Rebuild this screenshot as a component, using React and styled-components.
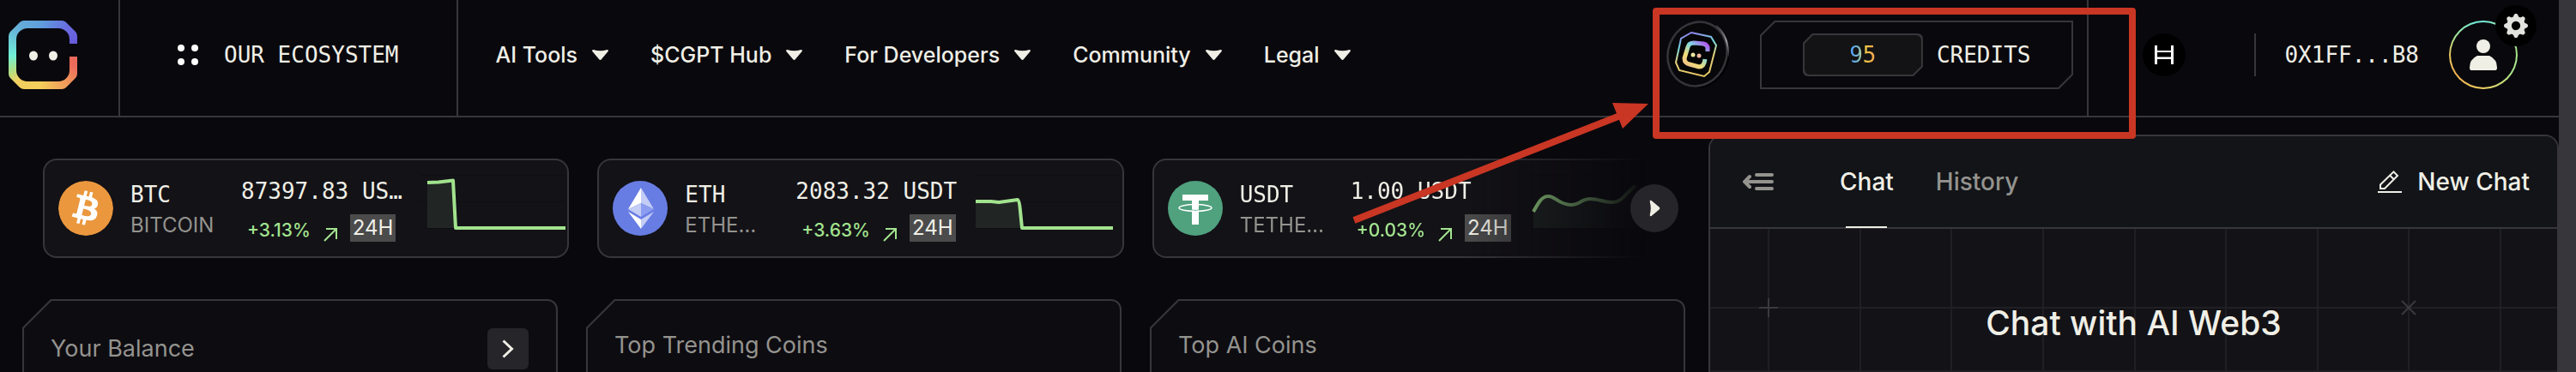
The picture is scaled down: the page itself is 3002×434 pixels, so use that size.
import React from "react";
import styled, { createGlobalStyle } from "styled-components";
import { BsGearFill } from "react-icons/bs";
import { SiBitcoin } from "react-icons/si";

const color = {
  page: "#09080d",
  panel: "#0d0c11",
  card: "#131217",
  line: "#37363a",
  text: "#f0efe6",
  muted: "#94938e",
  green: "#a2e38e",
  mark: "#c93623",
};
const sans = `Inter, "Liberation Sans", sans-serif`;
const mono = `"DejaVu Sans Mono", "Liberation Mono", monospace`;

const GlobalStyle = createGlobalStyle`
  *, *::before, *::after { box-sizing: border-box; }
  body { margin: 0; background: ${color.page}; color: ${color.text}; font-family: ${sans}; }
  button { margin: 0; padding: 0; border: 0; background: none; color: inherit; font: inherit; cursor: pointer; }
  svg { display: block; flex: none; }
  h1, h2, p { margin: 0; font-weight: 400; }
`;

const Page = styled.div`
  display: flex;
  min-height: 100vh;
`;
const Main = styled.div`
  flex: 1;
  min-width: 0;
  display: flex;
  flex-direction: column;
`;
const ScrollTrack = styled.div`
  flex: none;
  width: 20px;
  background: ${color.line};
`;

/* Header */
const Header = styled.header`
  position: relative;
  display: flex;
  border-bottom: 2px solid ${color.line};
`;
const HeaderCell = styled.div`
  display: flex;
  align-items: center;
  min-height: 135px;
  padding: 0 ${(p) => p.$right}px 7px ${(p) => p.$left}px;
  border-right: ${(p) => (p.$divided ? `2px solid ${color.line}` : "0")};
`;
const LogoLink = styled.a`
  position: relative;
  display: block;
  width: 80px;
  height: 80px;
`;
const LogoRing = styled.span`
  position: absolute;
  inset: 0;
  background: conic-gradient(#5e9bdc 0deg, #6a6be0 45deg, #6656da 75deg, #ec6a5a 95deg, #ec6a5a 110deg, #f09a5a 140deg, #f3cf5a 185deg, #f0d060 225deg, #a8e08a 245deg, #72f0d8 268deg, #66b0d8 315deg, #5e9bdc 360deg);
  clip-path: path("M18 0H62Q65 0 67 2L78 13Q80 15 80 18V27H71V22A13 13 0 0 0 58 9H22A13 13 0 0 0 9 22V58A13 13 0 0 0 22 71H58A13 13 0 0 0 71 58V42H80V62Q80 65 78 67L67 78Q65 80 62 80H18Q15 80 13 78L2 67Q0 65 0 62V18Q0 15 2 13L13 2Q15 0 18 0Z");
`;
const LogoEyes = styled.svg`
  position: absolute;
  inset: 0;
`;
const Mono = styled.span`
  font-family: ${mono};
  font-size: 26px;
  line-height: 36px;
  white-space: nowrap;
`;
const EcosystemButton = styled.button`
  display: flex;
  align-items: center;
  gap: 30px;
`;
const Nav = styled.nav`
  display: flex;
  gap: 49px;
`;
const NavButton = styled.button`
  display: flex;
  align-items: center;
  gap: 17px;
  font-size: 25px;
  font-weight: 500;
  line-height: 36px;
  white-space: nowrap;
`;
const Spacer = styled.div`
  flex: 1;
`;
const chamfer = (n) =>
  `polygon(${n}px 0, 100% 0, 100% calc(100% - ${n}px), calc(100% - ${n}px) 100%, 0 100%, 0 ${n}px)`;
const Chamfered = styled.div`
  position: relative;
  isolation: isolate;
  display: flex;
  align-items: center;
  background: ${color.line};
  border-radius: ${(p) => p.$radius}px;
  clip-path: ${(p) => chamfer(p.$cut)};
  &::before {
    content: "";
    position: absolute;
    z-index: -1;
    inset: 2px;
    background: ${(p) => p.$fill};
    border-radius: ${(p) => p.$radius}px;
    clip-path: ${(p) => chamfer(p.$cut - 1)};
  }
`;
const Credits = styled(Chamfered)`
  height: 80px;
  margin-left: 34px;
  padding: 0 50px;
  gap: 16px;
`;
const CreditCount = styled(Chamfered)`
  width: 140px;
  height: 50px;
  justify-content: center;
`;
const RainbowNumber = styled(Mono)`
  background: linear-gradient(90deg, #56a4f8 10%, #7fc0c8 35%, #f5d148 55%, #f2a04a 95%);
  background-clip: text;
  color: transparent;
`;
const Account = styled.div`
  display: flex;
  align-items: center;
`;
const ChainButton = styled.button`
  width: 50px;
  height: 50px;
  border-radius: 50%;
  background: #000;
  display: grid;
  place-items: center;
`;
const Rule = styled.span`
  width: 2px;
  height: 50px;
  margin: 0 33px 0 80px;
  background: ${color.line};
`;
const Avatar = styled.button`
  position: relative;
  width: 80px;
  height: 80px;
  margin-left: 35px;
  border: 2px solid transparent;
  border-radius: 50%;
  background:
    linear-gradient(${color.page}, ${color.page}) padding-box,
    conic-gradient(#72ead8, #a8e68a 50deg, #a8e68a 120deg, #f0d060 180deg, #f0b050 235deg, #e8c860 270deg, #a8e090 300deg, #72ead8 345deg) border-box;
  display: grid;
  place-items: center;
`;
const GearBadge = styled.span`
  position: absolute;
  top: -20px;
  right: -24px;
  width: 48px;
  height: 48px;
  border-radius: 50%;
  background: #000;
  color: #e2e2de;
  font-size: 28px;
  display: grid;
  place-items: center;
`;

/* Red call-out over the credits */
const Highlight = styled.div`
  position: absolute;
  z-index: 3;
  top: 9px;
  right: 493px;
  width: 563px;
  height: 153px;
  border: 8px solid ${color.mark};
  border-radius: 4px;
  pointer-events: none;
`;
const Pointer = styled.svg`
  position: absolute;
  z-index: 3;
  top: 110px;
  right: 1052px;
  pointer-events: none;
`;

/* Body */
const Body = styled.div`
  flex: 1;
  display: grid;
  grid-template-columns: minmax(0, 1fr) 991px;
`;
const Market = styled.main`
  display: flex;
  flex-direction: column;
  gap: 48px;
  padding-top: 48px;
`;
const Tickers = styled.section`
  position: relative;
  margin: 0 35px 0 50px;
`;
const TickerRow = styled.div`
  display: grid;
  grid-template-columns: repeat(3, minmax(0, 1fr));
  gap: 33px;
  mask-image: linear-gradient(90deg, #000 87%, transparent 98%);
`;
const Card = styled.article`
  display: flex;
  align-items: center;
  gap: 20px;
  height: 116px;
  padding-left: 16px;
  overflow: hidden;
  border: 2px solid ${color.line};
  border-radius: 16px;
  background: ${color.card};
`;
const CoinBadge = styled.span`
  flex: none;
  width: 64px;
  height: 64px;
  border-radius: 50%;
  overflow: hidden;
  background: ${(p) => p.$fill};
  background-clip: content-box;
  padding: ${(p) => (p.$inset ? "2px" : "0")};
  svg { margin: ${(p) => (p.$inset ? "-2px" : "0")}; }
`;
const Names = styled.div`
  display: flex;
  flex-direction: column;
  flex: none;
  width: 109px;
  padding-top: 4px;
`;
const CoinName = styled.span`
  color: ${color.muted};
  font-size: 24px;
  line-height: 36px;
`;
const Quote = styled.div`
  display: flex;
  flex-direction: column;
  gap: 9px;
  flex: none;
  width: 189px;
`;
const Change = styled.div`
  display: flex;
  align-items: flex-end;
  gap: 15px;
  padding-left: 7px;
  color: ${color.green};
`;
const Percent = styled.span`
  font-size: 21px;
  font-weight: 500;
  line-height: 26px;
`;
const Period = styled.span`
  padding: 0 3px;
  background: #4b4b4c;
  color: ${color.text};
  font-size: 24px;
  line-height: 32px;
`;
const NextButton = styled.button`
  position: absolute;
  top: 30px;
  right: 0;
  width: 56px;
  height: 56px;
  border-radius: 50%;
  background: #26252a;
  display: grid;
  place-items: center;
  svg { transform: rotate(-90deg); }
`;
const Boards = styled.section`
  flex: 1;
  display: grid;
  grid-template-columns: repeat(3, minmax(0, 1fr));
  gap: 33px;
  margin: 0 27px 0 26px;
`;
const cutCorner = (n) => `polygon(${n}px 0, 100% 0, 100% 100%, 0 100%, 0 ${n}px)`;
const Board = styled.article`
  position: relative;
  isolation: isolate;
  padding: 34px 34px 0 33px;
  background: ${color.line};
  border-radius: 0 12px 0 0;
  clip-path: ${cutCorner(33)};
  &::before {
    content: "";
    position: absolute;
    z-index: -1;
    inset: 2px 2px 0;
    background: ${color.panel};
    border-radius: 0 10px 0 0;
    clip-path: ${cutCorner(32)};
  }
`;
const BoardHead = styled.div`
  display: flex;
  align-items: center;
  justify-content: space-between;
`;
const BoardTitle = styled.h2`
  color: ${color.muted};
  font-size: 27px;
  line-height: 40px;
`;
const OpenButton = styled.button`
  width: 48px;
  height: 48px;
  border-radius: 6px;
  background: #26252a;
  display: grid;
  place-items: center;
`;

/* Chat */
const Chat = styled.aside`
  display: flex;
  flex-direction: column;
  margin-top: 20px;
  border: 2px solid ${color.line};
  border-bottom: 0;
  border-radius: 16px 16px 0 0;
  overflow: hidden;
  background: ${color.card};
`;
const ChatBar = styled.div`
  display: flex;
  align-items: center;
  height: 108px;
  padding: 0 32px 0 38px;
  border-bottom: 2px solid ${color.line};
  background: #121418;
`;
const Tabs = styled.div`
  display: flex;
  align-self: stretch;
  gap: 49px;
  margin-left: 77px;
`;
const Tab = styled.button`
  position: relative;
  color: ${(p) => (p.$active ? color.text : color.muted)};
  font-size: 28px;
  font-weight: 500;
  &::after {
    content: "";
    position: absolute;
    left: 50%;
    bottom: -1px;
    width: 48px;
    height: 2px;
    margin-left: -24px;
    background: ${(p) => (p.$active ? color.text : "transparent")};
  }
`;
const NewChat = styled.button`
  display: flex;
  align-items: center;
  gap: 18px;
  margin-left: auto;
  font-size: 28px;
  font-weight: 500;
`;
const ChatBody = styled.div`
  flex: 1;
  display: grid;
`;
const Grid = styled.div`
  grid-area: 1 / 1;
  display: grid;
  grid-template-columns: 69px repeat(8, minmax(0, 1fr)) 65px;
  grid-template-rows: 93px 1fr;
`;
const GridCell = styled.div`
  position: relative;
  border-right: ${(p) => (p.$last ? "0" : "2px solid #1f1f24")};
  border-bottom: 2px solid #1f1f24;
`;
const GridMark = styled.svg`
  position: absolute;
  z-index: 1;
  right: -12px;
  bottom: -12px;
`;
const ChatTitle = styled.h1`
  grid-area: 1 / 1;
  position: relative;
  z-index: 1;
  padding-top: 86px;
  text-align: center;
  font-size: 39px;
  font-weight: 500;
  line-height: 48px;
`;

const Caret = () => (
  <svg width="19" height="12" viewBox="0 0 19 12" aria-hidden="true">
    <path d="M1.500 0Q9.500 2.500 17.500 0Q19.500 0 18.600 2L11 11Q9.500 12.800 8 11L.4 2Q-.5 0 1.500 0Z" fill="#f0efe6" />
  </svg>
);

const Dots = () => (
  <svg width="24" height="24" viewBox="0 0 24 24" fill="#fff" aria-hidden="true">
    <circle cx="4" cy="4" r="4" />
    <circle cx="20" cy="4" r="4" />
    <circle cx="4" cy="20" r="4" />
    <circle cx="20" cy="20" r="4" />
  </svg>
);

const Token = () => (
  <svg width="76" height="80" viewBox="0 0 76 80" aria-hidden="true">
    <defs>
      <linearGradient id="token" x1="0.3" y1="0" x2="0.5" y2="1">
        <stop offset="0" stopColor="#8f7fe8" />
        <stop offset=".3" stopColor="#72d6dc" />
        <stop offset=".6" stopColor="#e8d27a" />
        <stop offset="1" stopColor="#e6c765" />
      </linearGradient>
      <linearGradient id="face" x1="0.9" y1="0" x2="0.1" y2="1">
        <stop offset="0" stopColor="#b05cf0" />
        <stop offset=".35" stopColor="#7fd8e0" />
        <stop offset=".7" stopColor="#f0dc78" />
        <stop offset="1" stopColor="#f0c08a" />
      </linearGradient>
      <linearGradient id="rim" x1="0" y1="0" x2="0" y2="1">
        <stop offset="0" stopColor="#353539" />
        <stop offset=".5" stopColor="#a0a0a4" />
        <stop offset="1" stopColor="#1a1a1d" />
      </linearGradient>
    </defs>
    <ellipse cx="39" cy="41" rx="35" ry="38" transform="rotate(22 39 41)" fill="#000" />
    <ellipse cx="37" cy="39" rx="34" ry="38" transform="rotate(22 37 39)" fill="#08080a" stroke="#353539" strokeWidth="2.500" />
    <path d="M59 6Q74 18 73 42" fill="none" stroke="url(#rim)" strokeWidth="2" />
    <path d="M30 14L53 19L59 29L51 60L45 65L16 58L12 49L18 21Z" fill="#050506" stroke="url(#token)" strokeWidth="2" />
    <path d="M49 36V31Q48 28 44 27L33 26Q27 26 26 31L22 44Q22 50 28 51L39 54Q45 54 46 45" fill="none" stroke="url(#face)" strokeWidth="5" />
    <circle cx="32" cy="40" r="2.500" fill="#f0e6a0" />
    <circle cx="39" cy="41" r="2.500" fill="#f0b8a0" />
  </svg>
);

const ChainIcon = () => (
  <svg width="22" height="22" viewBox="0 0 22 22" fill="#fff" aria-hidden="true">
    <path d="M0 0H3V6H19V0H22V22H19V16H3V22H0ZM3 8V13.500H19V8Z" fillRule="evenodd" />
  </svg>
);

const Person = () => (
  <svg width="32" height="36" viewBox="0 0 32 36" fill="#f0efe6" aria-hidden="true">
    <circle cx="16" cy="8" r="8" />
    <path d="M9 19H23Q32 23 32 33Q32 36 30 36H2Q0 36 0 33Q0 23 9 19Z" />
  </svg>
);

const Ether = () => (
  <svg width="64" height="64" viewBox="0 0 64 64" aria-hidden="true">
    <path d="M33 8V26L18 33Z" fill="#fff" />
    <path d="M33 8L48 33L33 26Z" fill="#c3cdf5" />
    <path d="M18 33L33 26V42Z" fill="#c3cdf5" />
    <path d="M48 33L33 26V42Z" fill="#8a9df0" />
    <path d="M18 36L33 45V56Z" fill="#fff" />
    <path d="M48 36L33 45V56Z" fill="#c3cdf5" />
  </svg>
);

const Tether = () => (
  <svg width="64" height="64" viewBox="0 0 64 64" aria-hidden="true">
    <path d="M17 16H47V23H36V51H28V23H17Z" fill="#fff" />
    <path d="M28 34Q32 35 36 34" fill="none" stroke="#50a17e" strokeWidth="1" />
    <ellipse cx="32" cy="31.500" rx="19" ry="4" fill="none" stroke="#fff" strokeWidth="1.500" />
  </svg>
);

const UpArrow = () => (
  <svg width="16" height="16" viewBox="0 0 16 16" fill="none" stroke="#a2e38e" strokeWidth="2" aria-hidden="true">
    <path d="M1 15L15 1M3 1H15V13" />
  </svg>
);

const Sparkline = ({ line, area }) => (
  <svg width="171" height="78" viewBox="0 0 171 78" fill="none" aria-hidden="true">
    <path d="M0 .5H169M0 31.500H169M0 62.500H169" stroke="#0f0e13" />
    <path d={area} fill="#212624" />
    <path d={line} stroke="#a2e38e" strokeWidth="4" strokeLinejoin="round" />
  </svg>
);

const CollapseIcon = () => (
  <svg width="36" height="20" viewBox="0 0 36 20" fill="none" stroke="#94938e" strokeWidth="4" strokeLinecap="round" aria-hidden="true">
    <path d="M16 2H34M3 10H34M16 18H34M8 4L2 10L8 16" />
  </svg>
);

const Pencil = () => (
  <svg width="28" height="26" viewBox="0 0 28 26" fill="none" stroke="#f0efe6" strokeWidth="2" aria-hidden="true">
    <path d="M3 21V16.500L18.500 1.400L23 6L8 21ZM14 5.500L19 10.500M0 25H28" />
  </svg>
);

const coins = [
  {
    symbol: "BTC", name: "BITCOIN", price: "87397.83 US…", change: "+3.13%",
    fill: "#fff", inset: true, icon: <SiBitcoin size={64} color="#ea973e" />,
    line: "M8 9L21 8.500L38 6.500L41 62H169", area: "M8 9L38 7L41 62H8Z",
  },
  {
    symbol: "ETH", name: "ETHE…", price: "2083.32 USDT", change: "+3.63%",
    fill: "#687de3", icon: <Ether />,
    line: "M1 31H19L28 32L50 29Q52 30 53 42L55 62H161", area: "M1 31H19L28 32L50 29L55 62H1Z",
  },
  {
    symbol: "USDT", name: "TETHE…", price: "1.00 USDT", change: "+0.03%",
    fill: "#50a17e", icon: <Tether />,
    line: "M4 43C10 32 14 25 21 25C29 24 33 35 48 35C58 35 60 28 70 28C80 28 86 32 96 32C108 32 110 22 123 13",
    area: "M4 43C10 32 14 25 21 25C29 24 33 35 48 35C58 35 60 28 70 28C80 28 86 32 96 32C108 32 110 22 123 13V62H4Z",
  },
];
const menus = ["AI Tools", "$CGPT Hub", "For Developers", "Community", "Legal"];
const gridCells = Array.from({ length: 20 }, (_, i) => i);

export default function App() {
  return (
    <>
      <GlobalStyle />
      <Page>
        <Main>
          <Header>
            <HeaderCell $left={10} $right={48} $divided>
              <LogoLink href="#" aria-label="Home">
                <LogoRing />
                <LogoEyes width="80" height="80" viewBox="0 0 80 80" fill="#f0efe6" aria-hidden="true">
                  <ellipse cx="29" cy="41" rx="5" ry="5.500" />
                  <ellipse cx="52" cy="41" rx="5" ry="5.500" />
                </LogoEyes>
              </LogoLink>
            </HeaderCell>
            <HeaderCell $left={67} $right={67} $divided>
              <EcosystemButton>
                <Dots />
                <Mono>OUR ECOSYSTEM</Mono>
              </EcosystemButton>
            </HeaderCell>
            <HeaderCell $left={44} $right={0}>
              <Nav>
                {menus.map((label) => (
                  <NavButton key={label} aria-haspopup="menu">
                    {label}
                    <Caret />
                  </NavButton>
                ))}
              </Nav>
            </HeaderCell>
            <Spacer />
            <HeaderCell $left={0} $right={16} $divided>
              <Token />
              <Credits $cut={17} $radius={0} $fill={color.page}>
                <CreditCount $cut={11} $radius={6} $fill="#131315">
                  <RainbowNumber>95</RainbowNumber>
                </CreditCount>
                <Mono>CREDITS</Mono>
              </Credits>
            </HeaderCell>
            <HeaderCell $left={63} $right={48}>
              <Account>
                <ChainButton aria-label="Network">
                  <ChainIcon />
                </ChainButton>
                <Rule />
                <Mono>0X1FF...B8</Mono>
                <Avatar aria-label="Account settings">
                  <Person />
                  <GearBadge>
                    <BsGearFill />
                  </GearBadge>
                </Avatar>
              </Account>
            </HeaderCell>
            <Highlight />
            <Pointer width="360" height="160" viewBox="0 0 360 160" aria-hidden="true">
              <path d="M8 147L318 25" stroke={color.mark} strokeWidth="8" />
              <path d="M309 10L351 11L321 40Z" fill={color.mark} />
            </Pointer>
          </Header>

          <Body>
            <Market>
              <Tickers>
                <TickerRow>
                  {coins.map((coin) => (
                    <Card key={coin.symbol}>
                      <CoinBadge $fill={coin.fill} $inset={coin.inset}>
                        {coin.icon}
                      </CoinBadge>
                      <Names>
                        <Mono>{coin.symbol}</Mono>
                        <CoinName>{coin.name}</CoinName>
                      </Names>
                      <Quote>
                        <Mono>{coin.price}</Mono>
                        <Change>
                          <Percent>{coin.change}</Percent>
                          <UpArrow />
                          <Period>24H</Period>
                        </Change>
                      </Quote>
                      <Sparkline line={coin.line} area={coin.area} />
                    </Card>
                  ))}
                </TickerRow>
                <NextButton aria-label="Next coins">
                  <Caret />
                </NextButton>
              </Tickers>
              <Boards>
                <Board>
                  <BoardHead>
                    <BoardTitle>Your Balance</BoardTitle>
                    <OpenButton aria-label="Open balance">
                      <svg width="14" height="22" viewBox="0 0 14 22" fill="none" stroke="#f0efe6" strokeWidth="3" aria-hidden="true">
                        <path d="M1.500 1.500L11.500 11L1.500 20.500" />
                      </svg>
                    </OpenButton>
                  </BoardHead>
                </Board>
                <Board>
                  <BoardTitle>Top Trending Coins</BoardTitle>
                </Board>
                <Board>
                  <BoardTitle>Top AI Coins</BoardTitle>
                </Board>
              </Boards>
            </Market>

            <Chat>
              <ChatBar>
                <button aria-label="Collapse chat">
                  <CollapseIcon />
                </button>
                <Tabs role="tablist">
                  <Tab role="tab" aria-selected="true" $active>Chat</Tab>
                  <Tab role="tab" aria-selected="false">History</Tab>
                </Tabs>
                <NewChat>
                  <Pencil />
                  New Chat
                </NewChat>
              </ChatBar>
              <ChatBody>
                <Grid aria-hidden="true">
                  {gridCells.map((i) => (
                    <GridCell key={i} $last={i % 10 === 9}>
                      {(i === 0 || i === 7) && (
                        <GridMark width="22" height="22" viewBox="0 0 22 22" fill="none" stroke="#3a3a40" strokeWidth="2">
                          <path d={i === 0 ? "M11 0V22M0 11H22" : "M3 3L19 19M19 3L3 19"} />
                        </GridMark>
                      )}
                    </GridCell>
                  ))}
                </Grid>
                <ChatTitle>Chat with AI Web3</ChatTitle>
              </ChatBody>
            </Chat>
          </Body>
        </Main>
        <ScrollTrack />
      </Page>
    </>
  );
}
